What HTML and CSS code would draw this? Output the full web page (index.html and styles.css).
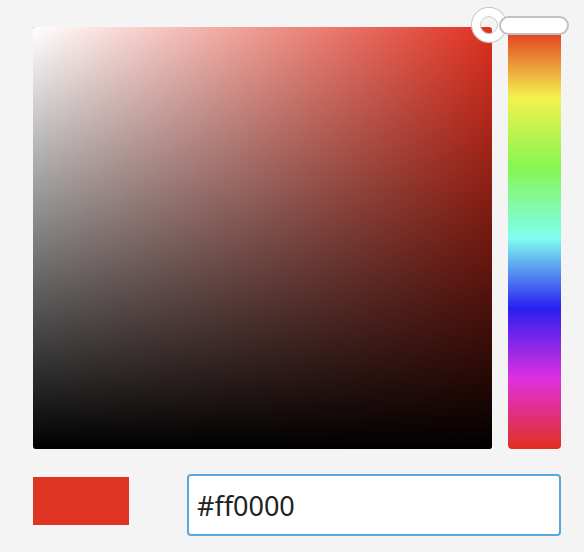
FILE: index.html
```html
<!DOCTYPE html>
<html>

<head>
  <meta name="viewport" content="width=device-width, initial-scale=1">
  <link rel="stylesheet" href="styles.css">
</head>

<body>
  <div class="picker">
    <div class="picker-top">
      <!-- saturation / value area -->
      <div class="sv-area">
        <div class="sv-white"></div>
        <div class="sv-black"></div>
        <div class="sv-handle"></div>
      </div>
      <!-- hue slider -->
      <div class="hue-bar">
        <div class="hue-handle"></div>
      </div>
    </div>

    <div class="picker-bottom">
      <div class="swatch"></div>
      <input type="text" class="hex-input" value="#ff0000">
    </div>
  </div>
</body>

</html>
```

FILE: styles.css
```css
* {
  box-sizing: border-box;
}

body {
  margin: 0;
  padding: 27px 23px 0 33px;
  background-color: #f4f4f4;
  font-family: "Noto Sans", "Open Sans", Arial, sans-serif;
}

.picker {
  width: 528px;
}

.picker-top {
  display: flex;
  gap: 16px;
  height: 422px;
}

/* Saturation / value square */
.sv-area {
  position: relative;
  width: 459px;
  height: 100%;
  border-radius: 3px;
  background-color: #e0301f;
}

.sv-white,
.sv-black {
  position: absolute;
  inset: 0;
  border-radius: 3px;
}

.sv-white {
  background: linear-gradient(to right, #ffffff, rgba(255, 255, 255, 0));
}

.sv-black {
  background: linear-gradient(to bottom, rgba(0, 0, 0, 0), #000000);
}

.sv-handle {
  position: absolute;
  top: -19px;
  right: -14px;
  width: 34px;
  height: 34px;
  border: 8px solid #ffffff;
  border-radius: 50%;
  box-shadow: 0 0 0 1px #c4c4c4, inset 0 0 0 1px #c4c4c4;
}

/* Hue slider */
.hue-bar {
  position: relative;
  width: 53px;
  height: 100%;
  border-radius: 4px;
  background: linear-gradient(to bottom,
      #e0301f 0%,
      #f4f24e 16.7%,
      #86f652 33.3%,
      #80fdf0 50%,
      #2a1ef0 66.7%,
      #e030e0 83.3%,
      #e0301f 100%);
}

.hue-handle {
  position: absolute;
  top: -11px;
  left: -9px;
  width: 70px;
  height: 19px;
  background-color: #ffffff;
  border: 2px solid #c2c2c2;
  border-radius: 10px;
}

/* Bottom row */
.picker-bottom {
  display: flex;
  align-items: flex-start;
  gap: 58px;
  margin-top: 25px;
}

.swatch {
  width: 96px;
  height: 48px;
  margin-top: 3px;
  background-color: #e03422;
}

.hex-input {
  width: 374px;
  height: 62px;
  padding: 0 8px;
  border: 2px solid #5aa9dc;
  border-radius: 4px;
  background: #ffffff;
  font-family: "Noto Sans", "Open Sans", Arial, sans-serif;
  font-size: 27px;
  color: #222222;
  outline: none;
}
```
